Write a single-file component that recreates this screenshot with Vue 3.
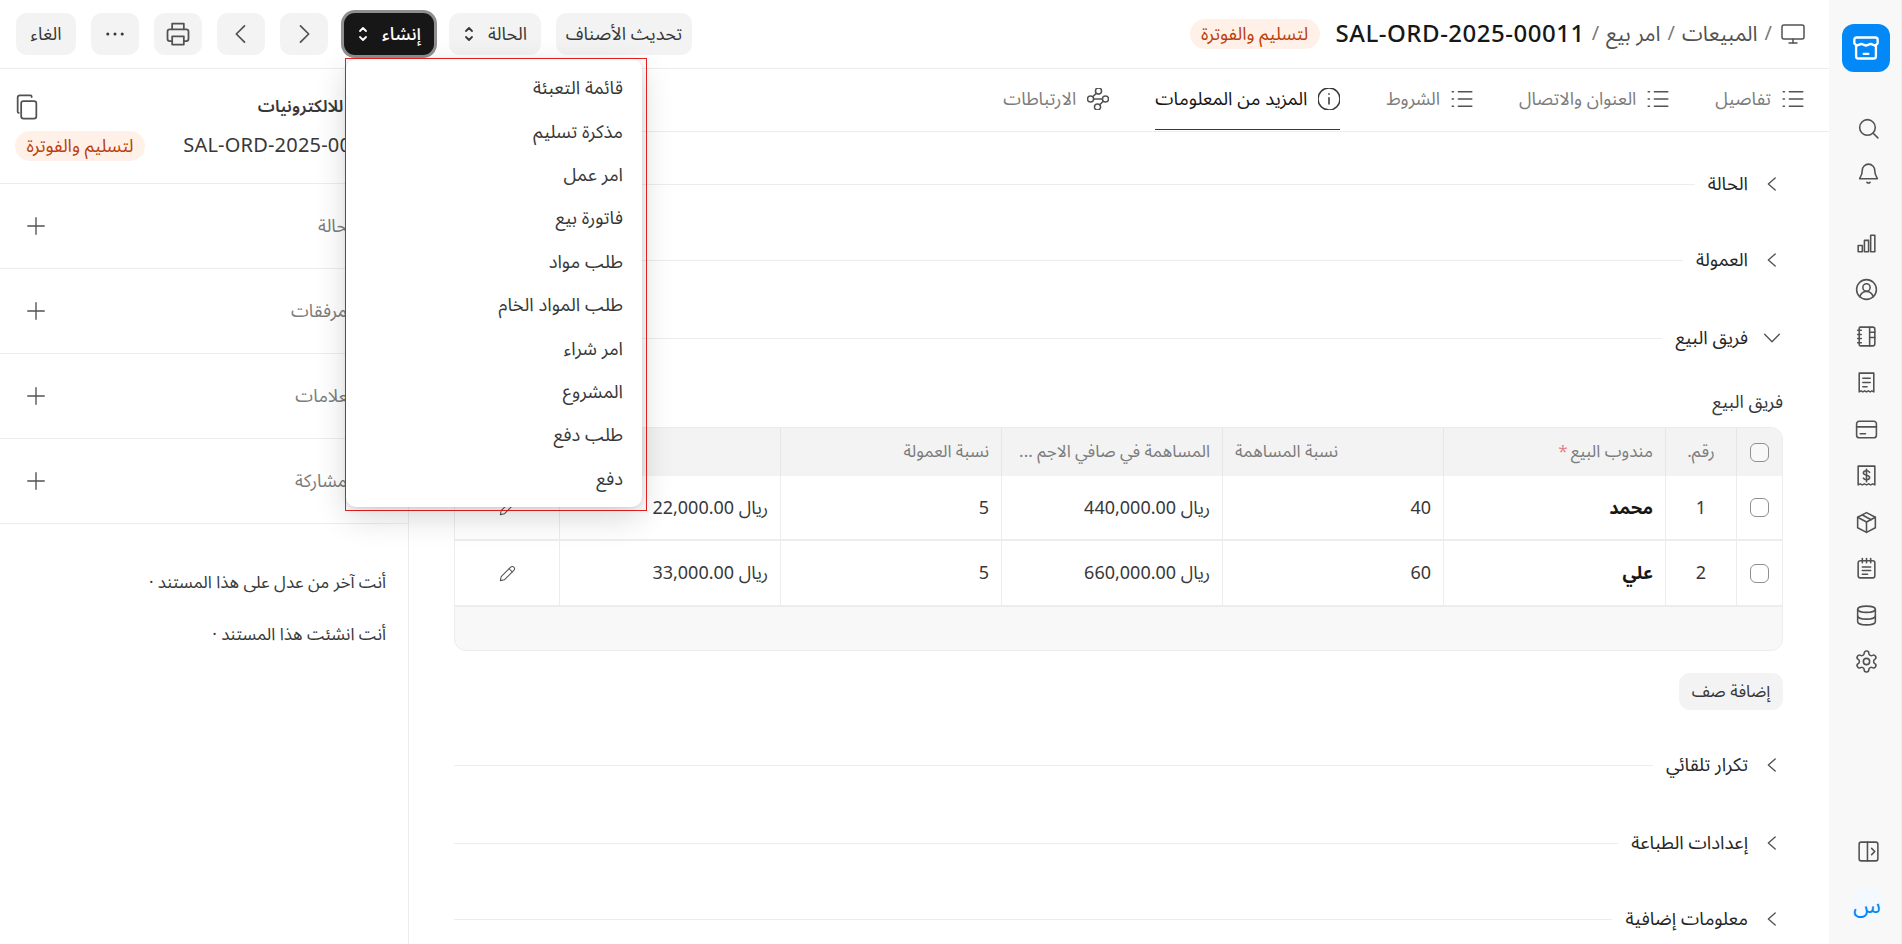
<script setup>
const navTop = [
  { y: 'search', d: ['M11 3.500a7.500 7.500 0 1 0 0 15 7.500 7.500 0 0 0 0-15z', 'M16.500 16.500 21 21'] },
  { y: 'bell', d: ['M12 3a6 6 0 0 0-6 6c0 5-2.500 7-2.500 8h17c0-1-2.500-3-2.500-8a6 6 0 0 0-6-6z', 'M10.500 20.500c.8.700 2.200.700 3 0'] }
]
const navMain = [
  ['M4 14h4v6H4z', 'M10 9h4v11h-4z', 'M16 4h4v16h-4z'],
  ['M12 2.500a9.500 9.500 0 1 0 0 19 9.500 9.500 0 0 0 0-19z', 'M12 6.500a3.500 3.500 0 1 0 0 7 3.500 3.500 0 0 0 0-7z', 'M5.500 19c1-3 3.500-5 6.500-5s5.500 2 6.500 5'],
  ['M6 3h12a2 2 0 0 1 2 2v14a2 2 0 0 1-2 2H6a1 1 0 0 1-1-1V4a1 1 0 0 1 1-1z', 'M15 3v18', 'M15 8h5', 'M15 13h5', 'M3.500 6H7', 'M3.500 10H7', 'M3.500 14H7', 'M3.500 18H7'],
  ['M5 3h14v18l-1.750-1-1.750 1-1.750-1-1.750 1-1.750-1-1.750 1-1.750-1L5 21z', 'M8.500 8h7', 'M8.500 12h7', 'M8.500 16h4'],
  ['M5 4h14a2.500 2.500 0 0 1 2.500 2.500v11A2.500 2.500 0 0 1 19 20H5a2.500 2.500 0 0 1-2.500-2.500v-11A2.500 2.500 0 0 1 5 4z', 'M2.500 9.500h19', 'M6 16h5'],
  ['M4 3h16v18l-2-1-2 1-2-1-2 1-2-1-2 1-2-1-2 1z', 'M15 9c-.5-1-1.500-1.500-3-1.500-2 0-3 1-3 2.200 0 2.600 6 1.400 6 4 0 1.300-1 2.300-3 2.300-1.500 0-2.500-.5-3-1.500', 'M12 6v12'],
  ['M12 2.500 20.500 7v10L12 21.500 3.500 17V7z', 'M3.500 7 12 11.500 20.500 7', 'M12 11.500v10', 'M8 4.800l8.500 4.500'],
  ['M6 4.500h12a2 2 0 0 1 2 2V19a2 2 0 0 1-2 2H6a2 2 0 0 1-2-2V6.500a2 2 0 0 1 2-2z', 'M8 2.500v4', 'M12 2.500v4', 'M16 2.500v4', 'M8 10.500h8', 'M8 14h8', 'M8 17.500h5'],
  ['M12 3c4.700 0 8.500 1.300 8.500 3v12c0 1.700-3.800 3-8.500 3s-8.500-1.300-8.500-3V6c0-1.700 3.800-3 8.500-3z', 'M3.500 6c0 1.700 3.800 3 8.500 3s8.500-1.300 8.500-3', 'M3.500 12.500c0 1.700 3.800 3 8.500 3s8.500-1.300 8.500-3'],
  ['M12 9a3 3 0 1 0 0 6 3 3 0 0 0 0-6z', 'M12.220 2h-.44a2 2 0 0 0-2 2v.18a2 2 0 0 1-1 1.730l-.43.250a2 2 0 0 1-2 0l-.15-.08a2 2 0 0 0-2.730.730l-.22.380a2 2 0 0 0 .730 2.730l.15.100a2 2 0 0 1 1 1.720v.510a2 2 0 0 1-1 1.740l-.15.090a2 2 0 0 0-.730 2.730l.22.380a2 2 0 0 0 2.730.730l.15-.08a2 2 0 0 1 2 0l.43.250a2 2 0 0 1 1 1.730V20a2 2 0 0 0 2 2h.44a2 2 0 0 0 2-2v-.18a2 2 0 0 1 1-1.730l.43-.25a2 2 0 0 1 2 0l.15.080a2 2 0 0 0 2.730-.73l.22-.39a2 2 0 0 0-.73-2.730l-.15-.08a2 2 0 0 1-1-1.740v-.5a2 2 0 0 1 1-1.740l.15-.09a2 2 0 0 0 .73-2.730l-.22-.38a2 2 0 0 0-2.730-.73l-.15.080a2 2 0 0 1-2 0l-.43-.25a2 2 0 0 1-1-1.730V4a2 2 0 0 0-2-2z']
]
const listIcon = ['M9 6h11', 'M9 12h11', 'M9 18h11', 'M4 6h1', 'M4 12h1', 'M4 18h1']
const tabs = [
  { label: 'تفاصيل', d: listIcon },
  { label: 'العنوان والاتصال', d: listIcon },
  { label: 'الشروط', d: listIcon },
  { label: 'المزيد من المعلومات', active: true, d: ['M12 3a9 9 0 1 0 0 18 9 9 0 0 0 0-18z', 'M12 11v5', 'M12 7.800v.4'] },
  { label: 'الارتباطات', d: ['M12.400 3a2.500 2.500 0 1 0 0 5 2.500 2.500 0 0 0 0-5z', 'M5.900 9.500a2.500 2.500 0 1 0 0 5 2.500 2.500 0 0 0 0-5z', 'M18.100 9.500a2.500 2.500 0 1 0 0 5 2.500 2.500 0 0 0 0-5z', 'M11.600 16a2.500 2.500 0 1 0 0 5 2.500 2.500 0 0 0 0-5z', 'M8.400 12h7.200', 'M10.600 7.400 7.700 10.200', 'M16.300 13.800 13.400 16.700'] }
]
const menu = ['قائمة التعبئة', 'مذكرة تسليم', 'امر عمل', 'فاتورة بيع', 'طلب مواد', 'طلب المواد الخام', 'امر شراء', 'المشروع', 'طلب دفع', 'دفع']
const sideRows = ['الحالة', 'المرفقات', 'العلامات', 'المشاركة']
const heads = ['', 'رقم.', 'مندوب البيع', 'نسبة المساهمة', 'المساهمة في صافي الاجم ...', 'نسبة العمولة', '', '']
const rows = [
  { n: 1, name: 'محمد', pct: 40, amount: '440,000.00', rate: 5, comm: '22,000.00' },
  { n: 2, name: 'علي', pct: 60, amount: '660,000.00', rate: 5, comm: '33,000.00' }
]
</script>

<template>
  <div class="app" dir="rtl">
    <aside class="nav">
      <div class="logo">
        <svg width="28" height="28" viewBox="0 0 24 24" fill="none" stroke="#fff" stroke-width="2" stroke-linejoin="round" stroke-linecap="round">
          <path d="M3.500 10v9a2 2 0 0 0 2 2h13a2 2 0 0 0 2-2v-9" />
          <path d="M4 3h16a2 2 0 0 1 2 2v3l-2 2-4-1.500-4 1.500-4-1.500L4 10 2 8V5a2 2 0 0 1 2-2z" />
          <path d="M10 17h4" />
        </svg>
      </div>
      <div class="nav-top">
        <svg v-for="i in navTop" :key="i.y" class="ic nav-ic" viewBox="0 0 24 24"><path v-for="p in i.d" :key="p" :d="p" /></svg>
      </div>
      <div class="nav-main">
        <svg v-for="(i, k) in navMain" :key="k" class="ic nav-ic" viewBox="0 0 24 24"><path v-for="p in i" :key="p" :d="p" /></svg>
      </div>
      <div class="nav-bottom">
        <svg class="ic nav-ic panel" viewBox="0 0 24 24">
          <path d="M5 3h14a2 2 0 0 1 2 2v14a2 2 0 0 1-2 2H5a2 2 0 0 1-2-2V5a2 2 0 0 1 2-2z" /><path d="M11 3v18" /><path d="m15 9 3 3-3 3" />
        </svg>
        <div class="avatar">س</div>
      </div>
    </aside>

    <div class="page">
      <header class="head">
        <div class="crumbs">
          <svg class="ic crumb-ic" viewBox="0 0 24 24"><path d="M3 3h18a2 2 0 0 1 2 2v10a2 2 0 0 1-2 2H3a2 2 0 0 1-2-2V5a2 2 0 0 1 2-2z" /><path d="M12 17v4" /><path d="M8 21h8" /></svg>
          <span class="sep">/</span><span class="crumb">المبيعات</span>
          <span class="sep">/</span><span class="crumb">امر بيع</span>
          <span class="sep">/</span><span class="doc">SAL-ORD-2025-00011</span>
          <span class="badge badge-head">لتسليم والفوترة</span>
        </div>
        <div class="actions">
          <button class="btn btn-update">تحديث الأصناف</button>
          <button class="btn btn-status">الحالة
            <svg class="updown" viewBox="0 0 12 20"><path d="m3 7 3-3 3 3" /><path d="m3 13 3 3 3-3" /></svg>
          </button>
          <button class="btn btn-dark">إنشاء
            <svg class="updown" viewBox="0 0 12 20"><path d="m3 7 3-3 3 3" /><path d="m3 13 3 3 3-3" /></svg>
          </button>
          <button class="btn btn-sq"><svg class="ic btn-ic" viewBox="0 0 24 24"><path d="m9 5 7 7-7 7" /></svg></button>
          <button class="btn btn-sq"><svg class="ic btn-ic" viewBox="0 0 24 24"><path d="m15 5-7 7 7 7" /></svg></button>
          <button class="btn btn-sq"><svg class="ic btn-ic print" viewBox="0 0 24 24"><path d="M7 8V3h10v5" /><path d="M7 18H5a2 2 0 0 1-2-2v-6a2 2 0 0 1 2-2h14a2 2 0 0 1 2 2v6a2 2 0 0 1-2 2h-2" /><path d="M7 14h10v7H7z" /></svg></button>
          <button class="btn btn-sq"><svg class="dots" viewBox="0 0 20 6"><circle cx="2" cy="3" r="1.700" /><circle cx="10" cy="3" r="1.700" /><circle cx="18" cy="3" r="1.700" /></svg></button>
          <button class="btn btn-cancel">الغاء</button>
        </div>
      </header>

      <div class="body">
        <main class="main">
          <nav class="tabs">
            <div v-for="t in tabs" :key="t.label" class="tab" :class="{ active: t.active }">
              <svg class="ic tab-ic" viewBox="3 3 18 18"><path v-for="p in t.d" :key="p" :d="p" /></svg>
              <span>{{ t.label }}</span>
            </div>
          </nav>
          <div class="content">
            <div class="sec"><svg class="ic chev" viewBox="0 0 24 24"><path d="m15.500 5.500-7.500 6.500 7.500 6.500" /></svg><span>الحالة</span><i></i></div>
            <div class="sec sec-mid"><svg class="ic chev" viewBox="0 0 24 24"><path d="m15.500 5.500-7.500 6.500 7.500 6.500" /></svg><span>العمولة</span><i></i></div>
            <div class="sec sec-open"><svg class="ic chev chev-open" viewBox="0 0 24 24"><path d="m4 8 8 8 8-8" /></svg><span>فريق البيع</span><i></i></div>
            <div class="sub">فريق البيع</div>
            <div class="table">
              <div class="tr th">
                <div v-for="(h, k) in heads" :key="k" class="td" :class="{ center: k === 1, end: k === 3 }">
                  <span v-if="k === 0" class="check"></span>
                  <template v-else>{{ h }}<span v-if="k === 2" class="req"> *</span></template>
                </div>
              </div>
              <div v-for="r in rows" :key="r.n" class="tr tb">
                <div class="td"><span class="check"></span></div>
                <div class="td center">{{ r.n }}</div>
                <div class="td bold">{{ r.name }}</div>
                <div class="td">{{ r.pct }}</div>
                <div class="td">ريال {{ r.amount }}</div>
                <div class="td">{{ r.rate }}</div>
                <div class="td">ريال {{ r.comm }}</div>
                <div class="td center"><svg class="ic pencil" viewBox="0 0 24 24"><path d="M16 4a2.800 2.800 0 0 1 4 4L8 20l-5 1 1-5z" /><path d="m14 6 4 4" /></svg></div>
              </div>
              <div class="tfoot"></div>
            </div>
            <div class="add-wrap"><button class="btn btn-add">إضافة صف</button></div>
            <div class="sec sec-a"><svg class="ic chev" viewBox="0 0 24 24"><path d="m15.500 5.500-7.500 6.500 7.500 6.500" /></svg><span>تكرار تلقائي</span><i></i></div>
            <div class="sec sec-b"><svg class="ic chev" viewBox="0 0 24 24"><path d="m15.500 5.500-7.500 6.500 7.500 6.500" /></svg><span>إعدادات الطباعة</span><i></i></div>
            <div class="sec sec-c"><svg class="ic chev" viewBox="0 0 24 24"><path d="m15.500 5.500-7.500 6.500 7.500 6.500" /></svg><span>معلومات إضافية</span><i></i></div>
          </div>
        </main>

        <aside class="side">
          <div class="side-top">
            <div class="side-title">
              <span>شركة للالكترونيات</span>
              <svg class="ic copy" viewBox="0 0 24 24"><path d="M9 7h9a2 2 0 0 1 2 2v11a2 2 0 0 1-2 2H9a2 2 0 0 1-2-2V9a2 2 0 0 1 2-2z" /><path d="M16 3.500V3a1 1 0 0 0-1-1H6a2 2 0 0 0-2 2v12a1 1 0 0 0 1 1" /></svg>
            </div>
            <div class="side-id">
              <span class="side-num">SAL-ORD-2025-00011</span>
              <span class="badge">لتسليم والفوترة</span>
            </div>
          </div>
          <div v-for="s in sideRows" :key="s" class="side-row">
            <span>{{ s }}</span>
            <svg class="ic plus" viewBox="0 0 24 24"><path d="M12 3v18" /><path d="M3 12h18" /></svg>
          </div>
          <div class="activity">
            <p>أنت آخر من عدل على هذا المستند ·</p>
            <p>أنت انشئت هذا المستند ·</p>
          </div>
        </aside>
      </div>
    </div>

    <div class="popper">
      <div class="menu">
        <div v-for="m in menu" :key="m" class="menu-item">{{ m }}</div>
      </div>
    </div>
  </div>
</template>

<style>
html, body { margin: 0; overflow: hidden; background: #fff; }
</style>

<style scoped>
.app { position: relative; display: flex; width: 1902px; height: 944px; overflow: hidden; background: #fff; color: #383838; font-family: "Noto Sans Arabic", "IBM Plex Sans Arabic", Inter, "Noto Sans", "DejaVu Sans", sans-serif; font-size: 18px; }
.ic { fill: none; stroke: #525252; stroke-width: 1.500; stroke-linecap: round; stroke-linejoin: round; flex: none; }
.nav { width: 73px; flex: none; box-sizing: border-box; background: #f8f8f8; border-right: 1px solid #ededed; display: flex; flex-direction: column; align-items: center; padding-top: 24px; }
.logo { width: 48px; height: 48px; border-radius: 12px; background: #0289f7; display: flex; align-items: center; justify-content: center; margin-right: -2px; }
.nav-top { display: flex; flex-direction: column; align-items: center; gap: 20px; margin-top: 43.500px; margin-right: -6px; }
.nav-ic { width: 25px; height: 25px; }
.nav-main { display: flex; flex-direction: column; align-items: center; gap: 21.500px; margin-top: 45px; margin-right: -2px; }
.nav-bottom { margin-top: auto; display: flex; flex-direction: column; align-items: center; gap: 24px; padding-bottom: 22px; }
.panel { margin-right: -6px; }
.avatar { width: 34px; height: 34px; border-radius: 50%; background: #f3f9ff; color: #0289f7; font-size: 23px; display: flex; align-items: center; justify-content: center; margin-left: 4px; }
.page { flex: 1; min-width: 0; display: flex; flex-direction: column; }
.head { height: 68px; flex: none; border-bottom: 1px solid #ededed; display: flex; align-items: center; justify-content: space-between; padding: 0 16px; }
.crumbs { display: flex; align-items: center; gap: 7px; padding-right: 8px; }
.crumb-ic { width: 24px; height: 24px; margin-left: 2px; }
.sep { color: #7c7c7c; font-size: 20px; }
.crumb { color: #525252; font-size: 21px; line-height: 32px; }
.doc { color: #171717; font-size: 24px; font-weight: 500; letter-spacing: .5px; }
.badge { display: inline-flex; align-items: center; justify-content: center; width: 130px; height: 30px; border-radius: 15px; background: #fff1e7; color: #bd3e0c; font-size: 18px; white-space: nowrap; }
.badge-head { margin-right: 9px; }
.actions { display: flex; gap: 15px; align-items: center; }
.btn { height: 42px; border: 0; border-radius: 11px; background: #f3f3f3; color: #383838; font: inherit; font-size: 18px; padding: 0; display: inline-flex; align-items: center; justify-content: center; gap: 13px; box-sizing: border-box; white-space: nowrap; flex: none; }
.btn-update { width: 136px; }
.btn-status { width: 92px; }
.btn-dark { background: #171717; color: #fff; font-weight: 500; box-shadow: 0 0 0 3px #8f8f8f; width: 90px; margin-left: 1px; }
.btn-dark .updown path { stroke: #fff; }
.updown { width: 12px; height: 20px; fill: none; stroke: #383838; stroke-width: 1.800; stroke-linecap: round; stroke-linejoin: round; }
.btn-sq { width: 48px; }
.btn-ic { width: 28px; height: 28px; }
.dots { width: 18px; height: 6px; fill: #383838; }
.btn-cancel { width: 60px; }
.body { flex: 1; display: flex; min-height: 0; }
.main { flex: 1; min-width: 0; border-left: 1px solid #ededed; display: flex; flex-direction: column; }
.tabs { height: 62px; box-sizing: content-box; flex: none; border-bottom: 1px solid #ededed; display: flex; gap: 46px; padding-right: 25px; }
.tab { display: flex; align-items: center; gap: 11px; color: #7c7c7c; font-size: 18px; height: 61px; box-sizing: border-box; border-bottom: 1px solid transparent; white-space: nowrap; }
.tab.active { color: #171717; font-size: 18.500px; border-bottom-color: #383838; }
.tab-ic { width: 22px; height: 22px; stroke-width: 1.250; }
.tab.active .tab-ic { stroke: #383838; }
.content { padding: 34px 46px 0 45px; flex: 1; min-height: 0; }
.sec { height: 36px; display: flex; align-items: center; color: #262626; font-size: 18.500px; white-space: nowrap; }
.sec i { flex: 1; height: 1px; background: #ededed; margin-right: 13px; }
.sec-mid { margin-top: 40px; }
.sec-open { margin-top: 42px; }
.chev { width: 22px; height: 22px; margin-left: 13px; stroke-width: 1.500; }
.chev-open { margin-left: 13px; margin-right: 0; }
.sub { margin-top: 34px; height: 24px; line-height: 24px; font-size: 18px; color: #383838; }
.table { margin-top: 13px; border: 1px solid #ededed; border-radius: 12px; overflow: hidden; height: 224px; box-sizing: border-box; background: #f8f8f8; }
.tr { display: grid; grid-template-columns: 46px 71px 222px 221px 221px 221px 221px 1fr; background: #fff; }
.th { height: 48px; background: #f3f3f3; color: #7c7c7c; font-size: 17px; }
.tb { height: 63px; border-bottom: 2px solid #ededed; box-sizing: content-box; font-size: 18px; }
.tb + .tb { height: 64px; }
.td { display: flex; align-items: center; padding: 0 12px; box-sizing: border-box; border-left: 1px solid #ededed; min-width: 0; white-space: nowrap; overflow: hidden; }
.th .td { border-left-color: #e6e6e6; }
.td:last-child { border-left: 0; }
.td:first-child { padding: 0; justify-content: center; }
.center { justify-content: center; padding: 0; }
.end { justify-content: flex-end; }
.bold { font-weight: 700; color: #171717; }
.req { color: #e03636; opacity: .6; margin-right: 3px; }
.check { width: 19px; height: 19px; border-radius: 6px; border: 1px solid #8f8f8f; background: #fff; box-sizing: border-box; display: block; }
.th .check { background: #f8f8f8; }
.pencil { width: 19px; height: 19px; stroke-width: 1.300; }
.add-wrap { margin-top: 22px; display: flex; }
.btn-add { height: 37px; width: 104px; font-size: 17px; }
.sec-a { margin-top: 37px; }
.sec-b { margin-top: 42px; }
.sec-c { margin-top: 40px; }
.side { width: 408px; flex: none; box-sizing: border-box; }
.side-top { height: 115px; border-bottom: 1px solid #ededed; box-sizing: border-box; padding: 26px 22px 0 15px; }
.side-title { display: flex; justify-content: space-between; align-items: center; height: 24px; font-weight: 600; font-size: 17px; color: #383838; }
.copy { width: 28px; height: 28px; margin-left: -2px; }
.side-id { display: flex; justify-content: space-between; align-items: center; height: 30px; margin-top: 12px; color: #383838; }
.side-num { font-size: 20px; letter-spacing: .2px; }
.side-row { height: 85px; border-bottom: 1px solid #ededed; box-sizing: border-box; display: flex; align-items: center; justify-content: space-between; padding: 0 51px 0 25px; color: #7c7c7c; font-size: 18px; }
.plus { width: 22px; height: 22px; }
.activity { padding: 47px 22px 0 0; font-size: 17px; color: #383838; }
.activity p { margin: 0 0 28px; line-height: 24px; }
.popper { position: absolute; left: 345px; top: 58px; width: 302px; height: 453px; box-sizing: border-box; border: 1px solid #f01f1f; z-index: 5; }
.menu { width: 296px; height: 448px; position: absolute; left: 0; top: 0; background: #fff; border-radius: 10px; box-shadow: 0 10px 32px rgba(0,0,0,.16), 0 1px 4px rgba(0,0,0,.1); padding: 8px 0 0; box-sizing: border-box; }
.menu-item { height: 43.400px; display: flex; align-items: center; padding: 0 19px; color: #383838; font-size: 18.400px; }
</style>
